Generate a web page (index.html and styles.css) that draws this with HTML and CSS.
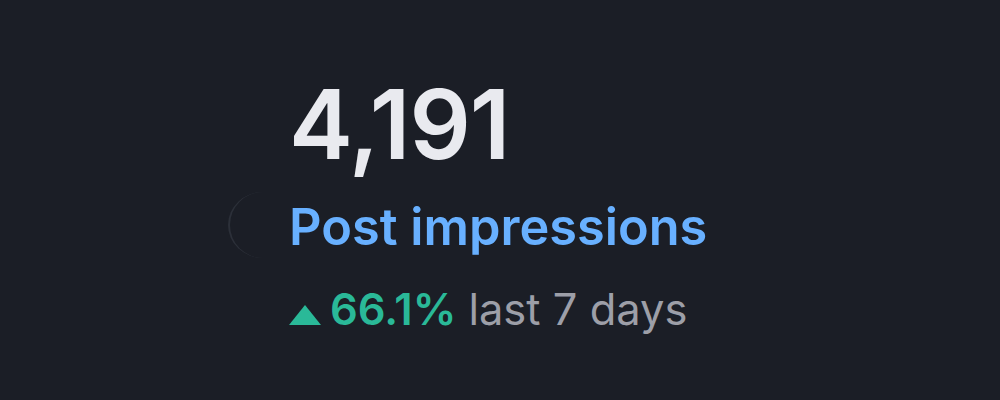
FILE: index.html
```html
<!DOCTYPE html>
<html lang="en">
<head>
<meta charset="UTF-8">
<meta name="viewport" content="width=device-width, initial-scale=1.0">
<title>Post impressions</title>
<link rel="stylesheet" href="styles.css">
</head>
<body>

<div class="stat-card">
    <span class="ring"></span>
    <div class="stat-value">4,191</div>
    <div class="stat-label">Post impressions</div>
    <div class="stat-change">
        <span class="arrow"></span>
        <span class="percent">66.1%</span>
        <span class="period">last 7 days</span>
    </div>
</div>

</body>
</html>
```

FILE: styles.css
```css
body {
    margin: 0;
    background: #1b1e26;
    font-family: Inter, "Noto Sans", sans-serif;
}
.stat-card {
    position: relative;
    padding: 76px 0 0 289px;
}
.ring {
    position: absolute;
    left: 228px;
    top: 192px;
    width: 70px;
    height: 66px;
    border-radius: 50%;
    border-left: 2px solid #2c3039;
    box-sizing: border-box;
}
.stat-value {
    font-size: 96px;
    font-weight: 600;
    line-height: 96px;
    color: #e9eaef;
    letter-spacing: -1px;
}
.stat-label {
    margin-top: 25px;
    font-size: 50.5px;
    font-weight: 600;
    line-height: 60px;
    color: #68b0ff;
}
.stat-change {
    margin-top: 27px;
    display: flex;
    align-items: baseline;
    gap: 9px;
    font-size: 43.5px;
    line-height: 50px;
}
.arrow {
    width: 0;
    height: 0;
    border-left: 16px solid transparent;
    border-right: 16px solid transparent;
    border-bottom: 20px solid #2ab998;
    margin-bottom: 6px;
}
.percent {
    font-weight: 600;
    color: #2ab998;
    margin-right: 3px;
}
.period {
    color: #9d9fa8;
}
```
